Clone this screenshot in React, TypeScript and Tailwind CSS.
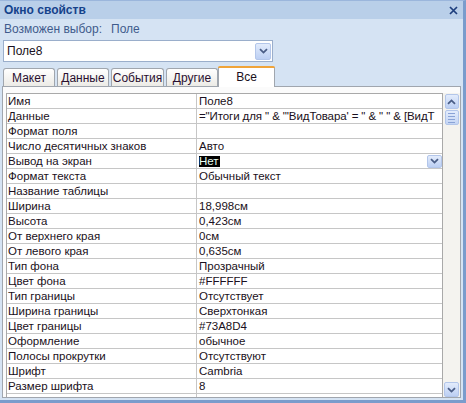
import React from "react";

const rows: [string, string][] = [
  ["Имя", "Поле8"],
  ["Данные", "=\"Итоги для \" & \"'ВидТовара' = \" & \" \" & [ВидТ"],
  ["Формат поля", ""],
  ["Число десятичных знаков", "Авто"],
  ["Вывод на экран", "Нет"],
  ["Формат текста", "Обычный текст"],
  ["Название таблицы", ""],
  ["Ширина", "18,998см"],
  ["Высота", "0,423см"],
  ["От верхнего края", "0см"],
  ["От левого края", "0,635см"],
  ["Тип фона", "Прозрачный"],
  ["Цвет фона", "#FFFFFF"],
  ["Тип границы", "Отсутствует"],
  ["Ширина границы", "Сверхтонкая"],
  ["Цвет границы", "#73A8D4"],
  ["Оформление", "обычное"],
  ["Полосы прокрутки", "Отсутствуют"],
  ["Шрифт", "Cambria"],
  ["Размер шрифта", "8"],
];

function Chevron({ up = false }: { up?: boolean }) {
  return (
    <svg width="9" height="6" viewBox="0 0 9 6" className={up ? "rotate-180" : ""}>
      <path d="M1 1.2 L4.5 4.6 L8 1.2" fill="none" stroke="#4a5d86" strokeWidth="1.8" />
    </svg>
  );
}

function BlueBtn({ up = false, cls = "" }: { up?: boolean; cls?: string }) {
  return (
    <div
      className={`flex items-center justify-center rounded-[2px] border border-[#b3c6ea] bg-gradient-to-b from-[#e3ecfc] to-[#bccff3] ${cls}`}
    >
      <Chevron up={up} />
    </div>
  );
}

const tabs = [
  { t: "Макет", w: "w-[52px]" },
  { t: "Данные", w: "w-[52px]" },
  { t: "События", w: "w-[53px]" },
  { t: "Другие", w: "w-[52px]" },
];

export default function App() {
  return (
    <div className="w-[466px] h-[403px] bg-[#d5e3f3] border-t border-t-[#9bb6dc] border-r-[3px] border-b-[3px] border-r-[#7a9ccc] border-b-[#7a9ccc] flex flex-col font-['Liberation_Sans',sans-serif] overflow-hidden">
      {/* title */}
      <div className="h-[18px] shrink-0 bg-[#b9cfe9] flex items-center justify-between pl-[4px] pr-[5px]">
        <span className="text-[12px] font-bold text-[#15428b] leading-none">Окно свойств</span>
        <svg width="9" height="9" viewBox="0 0 9 9">
          <path d="M1 1 L8 8 M8 1 L1 8" stroke="#1e3f7e" strokeWidth="1.7" />
        </svg>
      </div>
      {/* label */}
      <div className="h-[21px] shrink-0 pl-[4px] pt-[3px] text-[12px] leading-[14px] text-[#3f5b8c] flex gap-[9px]">
        <span>Возможен выбор:</span>
        <span>Поле</span>
      </div>
      {/* combo */}
      <div className="h-[22px] shrink-0 ml-[3px] w-[270px] bg-white border border-[#9aaecb] flex items-center justify-between pl-[3px] pr-[1px]">
        <span className="text-[12px] text-[#1a1020]">Поле8</span>
        <BlueBtn cls="w-[16px] h-[17px]" />
      </div>
      <div className="h-[4px] shrink-0" />
      {/* tabs */}
      <div className="h-[20px] shrink-0 flex items-end pl-[3px] relative z-10">
        {tabs.map((tb, i) => (
          <div
            key={tb.t}
            className={`${tb.w} h-[18px] ${i > 0 ? "ml-[2px]" : ""} border border-b-0 border-[#a0a6ae] rounded-t-[3px] bg-gradient-to-b from-[#ffffff] to-[#ecebe6] flex items-center justify-center text-[12px] text-[#2a1030] leading-none`}
          >
            {tb.t}
          </div>
        ))}
        <div className="w-[57px] h-[21px] -mb-[1px] border border-b-0 border-[#a0a6ae] border-t-0 rounded-t-[3px] bg-white flex flex-col">
          <div className="h-[2px] bg-[#f0a43a] rounded-t-[3px] -mx-[1px]" />
          <div className="flex-1 flex items-center justify-center text-[12px] text-[#1a1020] leading-none pb-[1px]">Все</div>
        </div>
      </div>
      {/* panel */}
      <div className="h-[312px] shrink-0 ml-[2px] w-[459px] border border-[#a0a6ae] bg-[#fbfbfb] pl-[3px] pt-[6px] flex overflow-hidden">
        <div className="w-[437px] border-l border-r border-t border-[#a9a9a9] bg-white flex flex-col overflow-hidden">
          {rows.map(([k, v]) => (
            <div key={k} className="h-[15px] shrink-0 flex border-b border-[#c6c6c6] text-[11.5px] leading-[14px] text-[#1a1020]">
              <div className="w-[190px] shrink-0 border-r border-[#c6c6c6] pl-[1px] whitespace-nowrap overflow-hidden">{k}</div>
              <div className="flex-1 min-w-0 pl-[2px] whitespace-nowrap overflow-hidden flex items-center justify-between">
                {k === "Вывод на экран" ? (
                  <>
                    <span className="bg-black text-[#e9fff2] h-[11px] leading-[11px] pr-[1px]">{v}</span>
                    <BlueBtn cls="w-[15px] h-[13px] mr-[0px]" />
                  </>
                ) : (
                  <span className={k === "Данные" ? "tracking-[-0.1px]" : ""}>{v}</span>
                )}
              </div>
            </div>
          ))}
          <div className="h-[15px] shrink-0 flex">
            <div className="w-[190px] border-r border-[#c6c6c6]" />
          </div>
        </div>
        {/* scrollbar */}
        <div className="w-[17px] bg-[#f4f3ef] flex flex-col items-center pt-[1px] pb-[0px]">
          <BlueBtn up cls="w-[14px] h-[15px]" />
          <div className="w-[14px] h-[15px] mt-[1px] rounded-[2px] border border-[#b3c6ea] bg-gradient-to-b from-[#e3ecfc] to-[#c4d5f4] flex flex-col items-center justify-center gap-[2px]">
            <div className="w-[7px] h-[1px] bg-[#8aa3d6]" />
            <div className="w-[7px] h-[1px] bg-[#8aa3d6]" />
            <div className="w-[7px] h-[1px] bg-[#8aa3d6]" />
            <div className="w-[7px] h-[1px] bg-[#8aa3d6]" />
          </div>
          <div className="flex-1" />
          <BlueBtn cls="w-[15px] h-[15px]" />
        </div>
      </div>
    </div>
  );
}
